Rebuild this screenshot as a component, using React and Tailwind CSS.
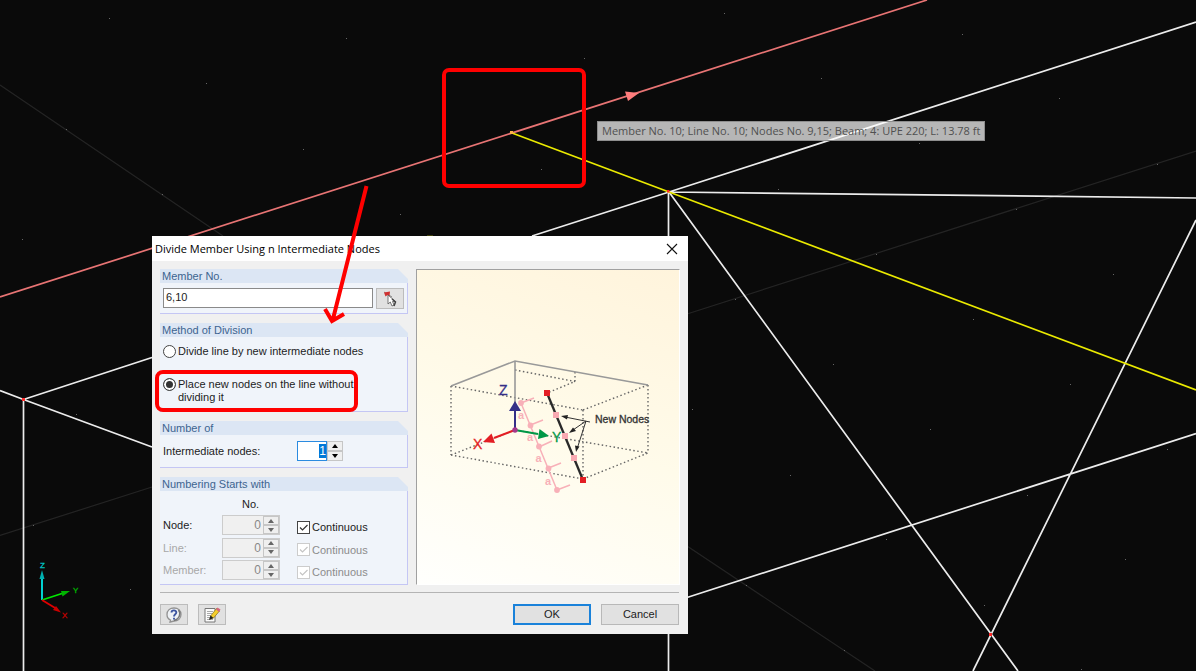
import { useState } from "react";

const stars = [
  [109, 18], [346, 38], [206, 83], [584, 58], [303, 149], [541, 169], [400, 214], [22, 239], [66, 129], [162, 194],
  [724, 13], [962, 34], [821, 78], [1059, 98], [919, 143], [1157, 164], [778, 189], [1016, 209], [876, 254],
  [735, 299], [1113, 274], [973, 319], [833, 364], [692, 409], [1070, 384], [930, 429], [790, 475], [1167, 449],
  [1027, 495], [886, 539], [1125, 559], [984, 605], [746, 585], [844, 650], [1081, 669], [130, 589], [76, 414], [33, 525],
];

function Viewport() {
  return (
    <svg className="absolute inset-0 h-full w-full" viewBox="0 0 1196 671" preserveAspectRatio="xMinYMin slice" fill="none">
      <g stroke="#242424" strokeWidth="1.200">
        <path d="M0 85L223 236M687 314L1196 151M687 546L875 671M0 535.500L152 487" />
      </g>
      <g fill="#666">
        {stars.map(([x, y]) => <rect key={`${x}-${y}`} x={x} y={y} width="1" height="1" />)}
      </g>
      <g stroke="#ececec" strokeWidth="1.7">
        <path d="M1196 22L669 192L532 236M669 192L1196 198M669 192L1018 671M1196 220L973 671M687 597.500L1196 433.500" />
        <path d="M0 390.500L23.500 399.500L152 447M23.500 399.500L152 357.500M23.500 400V671M668.500 192V671" />
      </g>
      <path d="M0 297L927 0" stroke="#e87474" strokeWidth="1.700" />
      <path d="M625 91.500L639 93L628 101Z" fill="#ff7d7d" />
      <path d="M512 133L669 192L1196 390" stroke="#eaea00" strokeWidth="1.700" />
      <path d="M427 236H433" stroke="#77770c" />
      <g fill="#ff2a2a">
        <rect x="22" y="398" width="3" height="3" />
        <rect x="667" y="190" width="2.500" height="2.500" />
        <rect x="989" y="633" width="3" height="3" />
      </g>
      <rect x="510" y="131" width="3" height="3" fill="#ffb04c" />
      <g strokeWidth="1.800">
        <path d="M42 600V577" stroke="#00e8e8" />
        <path d="M42 570L44.500 579H39.500Z" fill="#00b0b0" />
        <path d="M42 600L62 593.500" stroke="#00e800" />
        <path d="M70 591L61 591L62.500 596.500Z" fill="#00b400" />
        <path d="M42 600L56 608.500" stroke="#e00000" />
        <path d="M61 612.500L53 610L56 606Z" fill="#cc0000" />
      </g>
      <g fontFamily="Liberation Sans, sans-serif" fontSize="8" strokeWidth=".3">
        <text x="40" y="568" fill="#00c8c8" stroke="#00c8c8">Z</text>
        <text x="73" y="593" fill="#00b400" stroke="#00b400">Y</text>
        <text x="62" y="618" fill="#c80000" stroke="#c80000">X</text>
      </g>
    </svg>
  );
}

function Annotations() {
  return (
    <svg className="pointer-events-none absolute inset-0 h-full w-full" viewBox="0 0 1196 671" preserveAspectRatio="xMinYMin slice" fill="none" stroke="#ff0000" strokeWidth="4">
      <rect x="444" y="70" width="140" height="116" rx="5" />
      <rect x="157" y="372" width="199" height="38" rx="6" />
      <path d="M366.500 186L332.500 321M325 309L332 321L344 314" />
    </svg>
  );
}

function Diagram() {
  return (
    <svg className="w-full" viewBox="417 270 262 314" fill="none" aria-label="Member divided by new nodes">
      <g stroke="#666" strokeWidth="1.400" strokeDasharray="1.500 2.500">
        <path d="M451 386V455M451 386L583 410M451 455L583 479M583 410V479M583 410L648 385M648 385V453M583 479L648 453M515 370L575 381.500M575 372V381.500L547 393M451 455L515 430M515 430L648 453" />
      </g>
      <path d="M451 386L515 361L648 385M515 361V430" stroke="#999" strokeWidth="1.600" />
      <g stroke="#f8b0b8" strokeWidth="1.500">
        <path d="M521 403L557 490M521 403L534 398M530.500 425L543 420M539 447L552 441M548.500 468L561 463M557 490L570 485" />
      </g>
      <g fill="#f8b0b8">
        <circle cx="521" cy="403" r="2.900" />
        <circle cx="530.500" cy="425.500" r="2.900" />
        <circle cx="539" cy="446.500" r="2.900" />
        <circle cx="548.500" cy="468.500" r="2.900" />
        <circle cx="557" cy="490" r="2.900" />
        <g fontFamily="Liberation Sans, sans-serif" fontSize="11" fontWeight="bold">
          <text x="518" y="419">a</text>
          <text x="527" y="441">a</text>
          <text x="535.500" y="462">a</text>
          <text x="545" y="485">a</text>
        </g>
      </g>
      <path d="M515 430V408" stroke="#352f88" strokeWidth="2" />
      <path d="M515 401L521 411H509Z" fill="#352f88" />
      <path d="M515 430L494 438" stroke="#e31e24" strokeWidth="2" />
      <path d="M483 442L491.500 433.500L495 443Z" fill="#e31e24" />
      <path d="M515 430L538 434" stroke="#009846" strokeWidth="2" />
      <path d="M549 436L539.500 429L538 439Z" fill="#009846" />
      <circle cx="515" cy="430" r="2.700" fill="#a5398b" />
      <path d="M547 393L583 480" stroke="#292929" strokeWidth="2.300" />
      <g fill="#e31e24">
        <rect x="544" y="390" width="6" height="6" />
        <rect x="580" y="477" width="6" height="6" />
      </g>
      <g fill="#f8a9b1">
        <rect x="553" y="412" width="6" height="6" />
        <rect x="562" y="433" width="6" height="6" />
        <rect x="571" y="455" width="6" height="6" />
      </g>
      <path d="M590 422L565 417M586 421L573 430M586 421L577 449" stroke="#333" />
      <g fill="#222">
        <path d="M561 416L568 415L567 419.500Z" />
        <path d="M569 433L573 427.500L576 431Z" />
        <path d="M576 452L575 445.500L579.500 446.500Z" />
      </g>
      <g fontFamily="Liberation Sans, sans-serif" fontSize="14">
        <text x="499" y="395" fill="#352f88" stroke="#352f88" strokeWidth=".3">Z</text>
        <text x="473" y="449" fill="#e31e24" stroke="#e31e24" strokeWidth=".3">X</text>
        <text x="552" y="442" fill="#009846" stroke="#009846" strokeWidth=".3">Y</text>
        <text x="595" y="423" fontSize="10.500" fill="#333" stroke="#333" strokeWidth=".3">New Nodes</text>
      </g>
    </svg>
  );
}

function Group({ title, children, className }) {
  return (
    <section className={`flex flex-col ${className}`}>
      <h2 className="h-[14px] bg-[#dce6f4] px-[2px] text-[11px] leading-[14px] text-[#3c6490] [clip-path:polygon(0_0,calc(100%-10px)_0,100%_10px,100%_100%,0_100%)]">{title}</h2>
      <div className="flex-1 border-r border-b border-[#c4c6f4] bg-[#f0f4fa] px-[3px]">{children}</div>
    </section>
  );
}

function Arrows({ label, disabled, onStep }) {
  const fill = disabled ? "#666" : "#000";
  const cls = "flex flex-1 items-center justify-center border border-[#c6c6c6] bg-[#efefef]";
  return (
    <div className="flex w-4 flex-col">
      <button type="button" disabled={disabled} aria-label={`Increase ${label}`} className={cls} onClick={() => onStep(1)}>
        <svg className="h-1 w-2" viewBox="0 0 8 4"><path d="M4 0L7 4H1Z" fill={fill} /></svg>
      </button>
      <button type="button" disabled={disabled} aria-label={`Decrease ${label}`} className={cls} onClick={() => onStep(-1)}>
        <svg className="h-1 w-2" viewBox="0 0 8 4"><path d="M4 4L7 0H1Z" fill={fill} /></svg>
      </button>
    </div>
  );
}

function Check({ label, disabled }) {
  return (
    <label className={`flex items-center gap-[2px] pt-1 ${disabled ? "text-[#8c8c8c]" : "text-[#1c1c1c]"}`}>
      <span className="grid">
        <input type="checkbox" defaultChecked disabled={disabled} className="peer col-start-1 row-start-1 size-[13px] appearance-none border border-[#444] bg-white disabled:border-[#ccc]" />
        <svg className="pointer-events-none invisible col-start-1 row-start-1 size-[13px] peer-checked:visible" viewBox="0 0 13 13" fill="none">
          <path d="M3 6.500L5.500 9L10.500 4" stroke={disabled ? "#c4c4c4" : "#333"} strokeWidth="1.200" />
        </svg>
      </span>
      {label}
    </label>
  );
}

function NumberRow({ id, label, dim }) {
  return (
    <div className="grid grid-cols-[59px_75px_1fr] items-center">
      <label htmlFor={id} className={dim ? "text-[#a8a8a8]" : "text-[#1c1c1c]"}>{label}</label>
      <div className="flex h-5 w-[58px] border border-[#ccc] bg-[#f0f0f0]">
        <input id={id} disabled defaultValue="0" className="w-0 min-w-0 flex-1 pr-[2px] text-right text-[12px] text-[#888]" />
        <Arrows label={label} disabled />
      </div>
      <Check label="Continuous" disabled={dim} />
    </div>
  );
}

const radioCls = "size-[13px] shrink-0 appearance-none rounded-full border border-[#444] bg-white checked:bg-[#333] checked:shadow-[inset_0_0_0_2px_#fff]";
const toolCls = "flex h-[21px] w-7 items-center justify-center border border-[#bcbcbc] bg-[#e1e1e1]";

function Dialog() {
  const [count, setCount] = useState(1);
  return (
    <div role="dialog" aria-labelledby="dialog-title" className="absolute top-[236px] left-[152px] w-[536px] bg-[#f0f0f0] font-['Liberation_Sans',Arial,sans-serif] text-[11px] text-[#1c1c1c]">
      <header className="flex h-[25px] items-center justify-between bg-white pr-[10px] pl-[3px]">
        <h1 id="dialog-title" className="font-['Open_Sans','Noto_Sans',sans-serif] text-[11px] leading-6 text-black">Divide Member Using n Intermediate Nodes</h1>
        <button type="button" aria-label="Close">
          <svg className="size-3" viewBox="0 0 12 12"><path d="M1 1L11 11M11 1L1 11" stroke="#111" strokeWidth="1.100" /></svg>
        </button>
      </header>

      <div className="flex gap-2 px-2 pt-2 pb-[7px]">
        <div className="flex w-[248px] flex-col gap-[9px]">
          <Group title="Member No." className="h-[45px]">
            <div className="flex items-start justify-between pt-[5px]">
              <input aria-label="Member No." defaultValue="6,10" className="h-5 w-[210px] border border-[#8a8a8a] bg-white px-[2px] pb-[2px] text-[11px]" />
              <button type="button" aria-label="Select members" className={toolCls}>
                <svg className="size-4" viewBox="0 0 16 16">
                  <path d="M2 1L10 6" stroke="#888" />
                  <path d="M2 1.500L5 1L8 0.500L7.500 5L5.500 4L3.500 5.500Z" fill="#d03030" />
                  <path d="M6 4V13L8.300 11L10 15L12 14L10.500 10.500H13.500Z" fill="#fff" stroke="#555" strokeWidth=".8" />
                  <path d="M10 8L13.500 11L12 15" stroke="#444" strokeWidth="1.500" fill="none" />
                </svg>
              </button>
            </div>
          </Group>

          <Group title="Method of Division" className="h-[89px]">
            <div className="flex flex-col gap-5 pt-2">
              <label className="flex items-center gap-[2px] leading-[13px]">
                <input type="radio" name="method" className={radioCls} />
                Divide line by new intermediate nodes
              </label>
              <label className="flex items-start gap-[2px] leading-[13px]">
                <input type="radio" name="method" defaultChecked className={radioCls} />
                <span className="w-[176px]">Place new nodes on the line without dividing it</span>
              </label>
            </div>
          </Group>

          <Group title="Number of" className="h-[47px]">
            <div className="grid grid-cols-[134px_1fr] items-center pt-[6px]">
              <label htmlFor="count">Intermediate nodes:</label>
              <div className="flex h-5 w-[46px]">
                <div className="flex flex-1 items-center justify-end border border-[#2b8be0] bg-white">
                  <input id="count" value={count} onChange={(e) => setCount(e.target.value)} className="h-[14px] w-[7px] bg-[#0078d7] text-right text-[12px] text-white" />
                </div>
                <Arrows label="Intermediate nodes" onStep={(n) => setCount(Math.max(1, Number(count) + n))} />
              </div>
            </div>
          </Group>

          <Group title="Numbering Starts with" className="h-[108px]">
            <p className="pt-[5px] pb-[1px] pl-[79px] leading-4">No.</p>
            <div className="flex flex-col gap-[2px] pt-[2px]">
              <NumberRow id="node" label="Node:" />
              <NumberRow id="line" label="Line:" dim />
              <NumberRow id="member" label="Member:" dim />
            </div>
          </Group>
        </div>

        <div className="flex flex-1 border border-t-[#a0a0a0] border-r-white border-b-white border-l-[#a0a0a0] bg-linear-200 from-[#fff4dc] via-[#fffbea] to-[#fffffd]">
          <Diagram />
        </div>
      </div>

      <footer className="mr-[9px] ml-2 flex gap-[10px] border-t border-[#b4b4b4] pt-[11px] pb-[9px]">
        <button type="button" aria-label="Help" className={toolCls}>
          <svg className="size-4" viewBox="0 0 16 16">
            <path d="M8 1C12 1 15 3.500 15 7.500S12 14 8 14L4 15L4.500 13C2 12 1 10 1 7.500C1 3.500 4 1 8 1Z" fill="#eef1f5" stroke="#929292" strokeWidth="1.300" />
            <path d="M12.500 3C15 6 14 12 8 13.500" stroke="#777" strokeWidth="1.500" fill="none" />
            <path d="M5.500 5.500C5.500 2.700 10.500 2.700 10.300 5.500C10.200 7.300 8 7.200 8 9.500M8 10.800V12.500" stroke="#3d55a0" strokeWidth="1.900" fill="none" />
          </svg>
        </button>
        <button type="button" aria-label="Notes" className={toolCls}>
          <svg className="h-4 w-[18px]" viewBox="0 0 18 16">
            <path d="M2 1.500H12V15H2Z" fill="#fbfbfb" stroke="#777" />
            <path d="M4 4.500H10M4 6.500H9M4 8.500H8M4 10.500H7M4 12.500H10" stroke="#aaa" />
            <path d="M7 12L8 8.500L13.500 1.500L16.500 4L10.500 11Z" fill="#f5ce2c" stroke="#826a19" strokeWidth=".7" />
            <path d="M13 2.500L14.500 .5L17.500 2.500L16 5Z" fill="#d4667c" />
            <path d="M6 13L7.500 8.500L10.500 11Z" fill="#222" />
          </svg>
        </button>
        <button type="button" className="ml-auto h-[21px] w-[78px] border-2 border-[#1a82da] bg-[#e1e1e1]">OK</button>
        <button type="button" className="h-[21px] w-[78px] border border-[#b8b8b8] bg-[#e1e1e1]">Cancel</button>
      </footer>
    </div>
  );
}

export default function App() {
  return (
    <main className="relative min-h-screen w-full overflow-hidden bg-[#0a0a0a]">
      <Viewport />
      <div role="tooltip" className="absolute top-[121px] left-[597px] border border-[#8e8e8e] bg-white/70 px-[4px] font-['Open_Sans','Noto_Sans',sans-serif] text-[11px] leading-[18px] whitespace-nowrap text-[#505050]">
        Member No. 10; Line No. 10; Nodes No. 9,15; Beam; 4: UPE 220; L: 13.78 ft
      </div>
      <Dialog />
      <Annotations />
    </main>
  );
}
